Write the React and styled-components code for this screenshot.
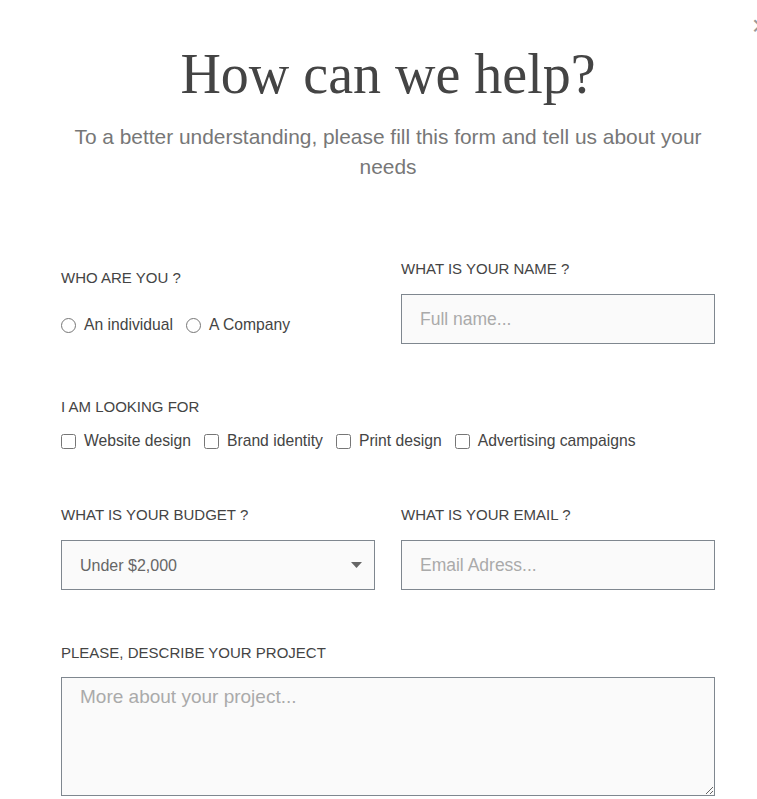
import React from 'react';
import styled, { createGlobalStyle } from 'styled-components';

const GlobalStyle = createGlobalStyle`
  html, body {
    margin: 0;
    padding: 0;
    background: #fff;
    overflow-x: hidden;
  }
  body {
    font-family: 'Liberation Sans', Arial, sans-serif;
    color: #444;
  }
  * {
    box-sizing: border-box;
  }
`;

const Modal = styled.div`
  position: relative;
  width: 776px;
  padding: 42px 61px 30px;
  background: #fff;
`;

const CloseButton = styled.button`
  position: absolute;
  top: 12px;
  right: 8px;
  border: none;
  background: none;
  padding: 0;
  font-family: 'Liberation Sans', Arial, sans-serif;
  font-size: 28px;
  line-height: 1;
  color: #999;
  cursor: pointer;
`;

const Header = styled.header`
  text-align: center;
  margin-bottom: 77px;
`;

const Title = styled.h1`
  margin: 0 0 16px;
  font-family: 'Liberation Serif', 'Times New Roman', serif;
  font-weight: 400;
  font-size: 56px;
  line-height: 64px;
  color: #444;
`;

const Subtitle = styled.p`
  margin: 0;
  font-size: 20.9px;
  line-height: 30px;
  color: #777;
`;

const Form = styled.form`
  display: flex;
  flex-direction: column;
`;

const Row = styled.div`
  display: grid;
  grid-template-columns: 314px 314px;
  column-gap: 26px;
  align-items: center;
  margin-top: ${(p) => p.$mt || 0}px;
`;

const Field = styled.div`
  display: flex;
  flex-direction: column;
  gap: ${(p) => p.$gap || 15}px;
  margin-top: ${(p) => p.$mt || 0}px;
`;

const Label = styled.label`
  font-size: 15px;
  line-height: 20px;
  text-transform: uppercase;
  color: #444;
`;

const Options = styled.div`
  display: flex;
  align-items: center;
  gap: 13px;
`;

const Option = styled.label`
  display: flex;
  align-items: center;
  gap: 8px;
  font-size: 15.7px;
  line-height: 20px;
  color: #444;
  white-space: nowrap;

  input {
    width: 15px;
    height: 15px;
    margin: 0;
  }
`;

const TextInput = styled.input`
  width: 100%;
  height: 50px;
  padding: 0 18px;
  border: 1px solid #7f878f;
  border-radius: 0;
  background: #fafafa;
  font-family: inherit;
  font-size: 17.5px;
  color: #444;
  outline: none;

  &::placeholder {
    color: #aaa;
  }
`;

const SelectWrap = styled.div`
  position: relative;
`;

const Select = styled.select`
  width: 100%;
  height: 50px;
  padding: 0 40px 0 18px;
  border: 1px solid #7f878f;
  border-radius: 0;
  background: #fafafa;
  font-family: inherit;
  font-size: 16px;
  color: #666;
  appearance: none;
  outline: none;
`;

const Caret = styled.svg`
  position: absolute;
  right: 13px;
  top: 22px;
  pointer-events: none;
`;

const TextArea = styled.textarea`
  width: 100%;
  height: 119px;
  padding: 6px 18px;
  border: 1px solid #7f878f;
  border-radius: 0;
  background: #fafafa;
  font-family: inherit;
  font-size: 19px;
  line-height: 26px;
  color: #444;
  outline: none;

  &::placeholder {
    color: #aaa;
  }
`;

const services = ['Website design', 'Brand identity', 'Print design', 'Advertising campaigns'];

export default function App() {
  return (
    <>
      <GlobalStyle />
      <Modal>
        <CloseButton type="button" aria-label="Close">×</CloseButton>
        <Header>
          <Title>How can we help?</Title>
          <Subtitle>
            To a better understanding, please fill this form and tell us about your needs
          </Subtitle>
        </Header>

        <Form>
          <Row>
            <Field $gap={27}>
              <Label>Who are you ?</Label>
              <Options>
                <Option><input type="radio" name="who" /> An individual</Option>
                <Option><input type="radio" name="who" /> A Company</Option>
              </Options>
            </Field>
            <Field>
              <Label>What is your name ?</Label>
              <TextInput placeholder="Full name..." />
            </Field>
          </Row>

          <Field $gap={14} $mt={53}>
            <Label>I am looking for</Label>
            <Options>
              {services.map((s) => (
                <Option key={s}><input type="checkbox" /> {s}</Option>
              ))}
            </Options>
          </Field>

          <Row $mt={54}>
            <Field>
              <Label>What is your budget ?</Label>
              <SelectWrap>
                <Select defaultValue="under">
                  <option value="under">Under $2,000</option>
                  <option value="mid">$2,000 - $5,000</option>
                  <option value="high">Over $5,000</option>
                </Select>
                <Caret width="11" height="6" viewBox="0 0 11 6">
                  <path d="M0 0h11L5.5 6z" fill="#666" />
                </Caret>
              </SelectWrap>
            </Field>
            <Field>
              <Label>What is your email ?</Label>
              <TextInput type="email" placeholder="Email Adress..." />
            </Field>
          </Row>

          <Field $mt={53} $gap={14}>
            <Label>Please, describe your project</Label>
            <TextArea placeholder="More about your project..." />
          </Field>
        </Form>
      </Modal>
    </>
  );
}
